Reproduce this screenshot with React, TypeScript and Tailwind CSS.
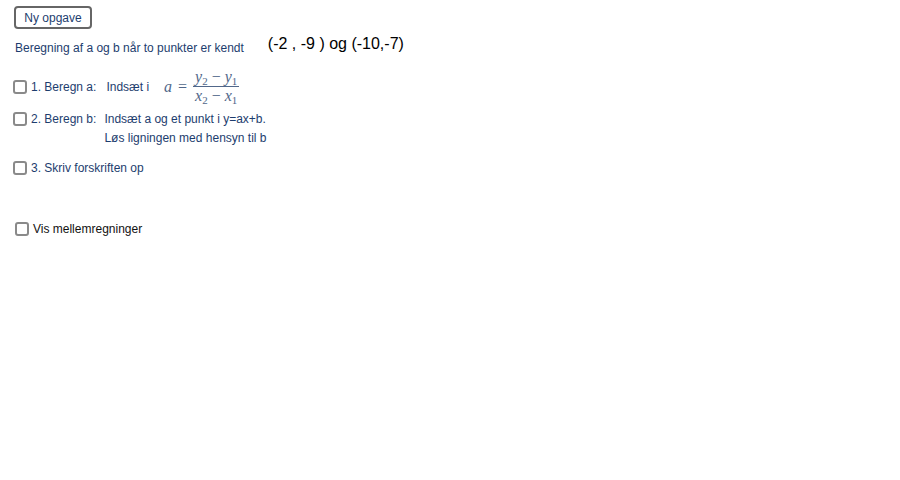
const BLUE = "text-[#1d3d6e]";

function Box({ className = "" }: { className?: string }) {
  return (
    <span
      className={`inline-block h-[14px] w-[14px] shrink-0 rounded-[3px] border-2 border-[#8a8a8a] bg-white ${className}`}
    />
  );
}

function Fraction() {
  return (
    <span className="ml-[15px] inline-flex items-center font-['Liberation_Serif','DejaVu_Serif',serif] text-[16px] text-[#51678a]">
      <span className="italic">a</span>
      <span className="ml-[6px]">=</span>
      <span className="ml-[6px] flex flex-col items-center leading-[18px]">
        <span className="px-[2px]">
          <i>y</i>
          <sub className="text-[11px]">2</sub> − <i>y</i>
          <sub className="text-[11px]">1</sub>
        </span>
        <span className="h-px w-full bg-[#51678a]" />
        <span className="px-[2px]">
          <i>x</i>
          <sub className="text-[11px]">2</sub> − <i>x</i>
          <sub className="text-[11px]">1</sub>
        </span>
      </span>
    </span>
  );
}

export default function App() {
  return (
    <div className="h-[480px] w-[900px] bg-white font-['Liberation_Sans',Arial,sans-serif] text-[12px]">
      <div className="flex flex-col pl-[13px] pt-[6px]">
        <button className={`ml-[1px] h-[23px] w-[78px] rounded-[4px] border-2 border-[#666] bg-white text-[12px] ${BLUE}`}>
          Ny opgave
        </button>

        <div className="mt-[2px] flex items-center">
          <span className={`ml-[2px] mt-[8px] ${BLUE}`}>Beregning af a og b når to punkter er kendt</span>
          <span className="ml-[24px] text-[16px] text-black">(-2 , -9 ) og (-10,-7)</span>
        </div>

        <div className="mt-[11px] flex items-center">
          <Box />
          <span className={`ml-[4px] ${BLUE}`}>1. Beregn a:</span>
          <span className={`ml-[10px] ${BLUE}`}>Indsæt i</span>
          <Fraction />
        </div>

        <div className="mt-[7px] flex items-start">
          <Box />
          <span className={`ml-[4px] leading-[14px] ${BLUE}`}>2. Beregn b:</span>
          <div className={`ml-[8px] flex flex-col gap-[5px] leading-[14px] ${BLUE}`}>
            <span>Indsæt a og et punkt i y=ax+b.</span>
            <span>Løs ligningen med hensyn til b</span>
          </div>
        </div>

        <div className="mt-[14px] flex items-center">
          <Box />
          <span className={`ml-[4px] ${BLUE}`}>3. Skriv forskriften op</span>
        </div>

        <div className="ml-[2px] mt-[43px] flex items-center">
          <Box />
          <span className="ml-[4px] text-[#111]">Vis mellemregninger</span>
        </div>
      </div>
    </div>
  );
}
